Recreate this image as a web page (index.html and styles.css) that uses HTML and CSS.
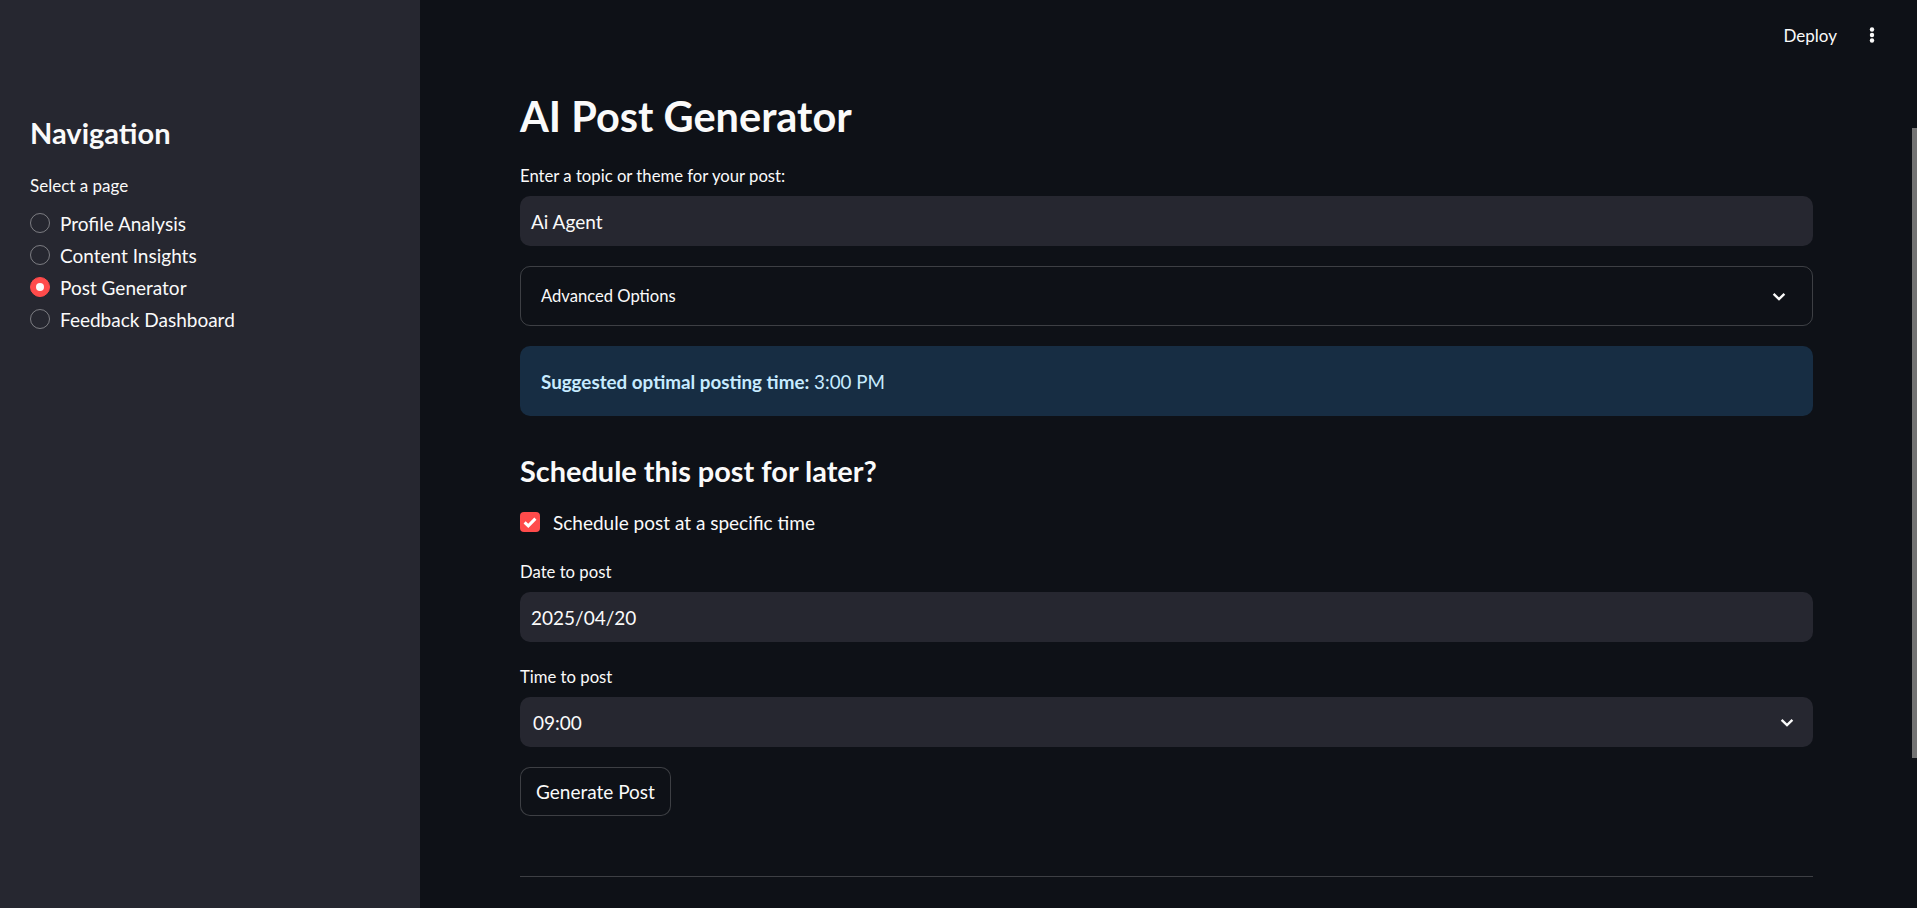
FILE: index.html
```html
<!DOCTYPE html>
<html lang="en">
<head>
<meta charset="utf-8">
<title>AI Post Generator</title>
<link rel="stylesheet" href="styles.css">
</head>
<body>
<div class="app">
  <aside class="sidebar">
    <h2 class="side-title">Navigation</h2>
    <div class="widget-label">Select a page</div>
    <div class="radio-list">
      <div class="radio"><span class="radio-dot"></span><span>Profile Analysis</span></div>
      <div class="radio"><span class="radio-dot"></span><span>Content Insights</span></div>
      <div class="radio selected"><span class="radio-dot"></span><span>Post Generator</span></div>
      <div class="radio"><span class="radio-dot"></span><span>Feedback Dashboard</span></div>
    </div>
  </aside>
  <main class="main">
    <header class="topbar">
      <span class="deploy">Deploy</span>
      <span class="kebab">
        <svg width="24" height="24" viewBox="0 0 24 24"><circle cx="12" cy="6.5" r="2.2" fill="#fafafa"/><circle cx="12" cy="12" r="2.2" fill="#fafafa"/><circle cx="12" cy="17.5" r="2.2" fill="#fafafa"/></svg>
      </span>
    </header>
    <div class="content">
      <h1 class="title">AI Post Generator</h1>
      <div class="field">
        <div class="widget-label">Enter a topic or theme for your post:</div>
        <div class="input">Ai Agent</div>
      </div>
      <div class="expander">
        <span>Advanced Options</span>
        <svg class="chev" width="14" height="9" viewBox="0 0 14 9"><path d="M1.6 1.8 L7 7 L12.4 1.8" fill="none" stroke="#fafafa" stroke-width="2.4"/></svg>
      </div>
      <div class="info"><strong>Suggested optimal posting time:</strong>&nbsp;3:00 PM</div>
      <h3 class="subtitle">Schedule this post for later?</h3>
      <div class="checkbox">
        <span class="check-box"><svg width="20" height="20" viewBox="0 0 20 20"><path d="M4.6 10.4 L8.3 13.9 L15.4 6.6" fill="none" stroke="#fff" stroke-width="3"/></svg></span>
        <span>Schedule post at a specific time</span>
      </div>
      <div class="field">
        <div class="widget-label">Date to post</div>
        <div class="input">2025/04/20</div>
      </div>
      <div class="field">
        <div class="widget-label">Time to post</div>
        <div class="input select">
          <span>09:00</span>
          <svg class="chev" width="14" height="9" viewBox="0 0 14 9"><path d="M1.6 1.8 L7 7 L12.4 1.8" fill="none" stroke="#fafafa" stroke-width="2.4"/></svg>
        </div>
      </div>
      <div class="btn-row"><button class="btn">Generate Post</button></div>
      <hr class="divider">
    </div>
  </main>
  <div class="scroll-thumb"></div>
</div>
</body>
</html>
```

FILE: styles.css
```css
* { box-sizing: border-box; }
html, body {
  margin: 0;
  padding: 0;
  height: 100%;
  background: #0e1117;
  color: #fafafa;
  font-family: Lato, "Noto Sans", sans-serif;
  overflow: hidden;
}
.app {
  display: flex;
  height: 908px;
  position: relative;
}
.sidebar {
  width: 420px;
  flex: 0 0 420px;
  background: #262730;
  padding: 113px 30px 0 30px;
}
.side-title {
  margin: 0 0 18px 0;
  font-size: 29px;
  line-height: 40px;
  font-weight: 700;
}
.widget-label {
  font-size: 16.7px;
  line-height: 30px;
  margin-bottom: 5px;
}
.sidebar .widget-label { margin-bottom: 6px; font-size: 17px; }
.radio-list { display: flex; flex-direction: column; }
.radio {
  display: flex;
  align-items: center;
  gap: 10px;
  height: 32px;
  font-size: 19px;
}
.radio-dot {
  width: 20px;
  height: 20px;
  border-radius: 50%;
  border: 1px solid rgba(250, 250, 250, 0.4);
  flex: 0 0 20px;
}
.radio.selected .radio-dot {
  background: #ff4b4b;
  border-color: #ff4b4b;
  display: flex;
  align-items: center;
  justify-content: center;
}
.radio.selected .radio-dot::after {
  content: "";
  width: 8px;
  height: 8px;
  border-radius: 50%;
  background: #fafafa;
}
.main {
  flex: 1;
  display: flex;
  flex-direction: column;
}
.topbar {
  height: 70px;
  display: flex;
  align-items: center;
  justify-content: flex-end;
  gap: 23px;
  padding-right: 33px;
}
.deploy { font-size: 17px; }
.kebab { display: flex; }
.content {
  padding: 21px 104px 0 100px;
  display: flex;
  flex-direction: column;
  gap: 20px;
}
.title {
  margin: 0;
  font-size: 41.5px;
  line-height: 50px;
  font-weight: 700;
}
.field { display: flex; flex-direction: column; }
.input {
  height: 50px;
  background: #262730;
  border-radius: 10px;
  display: flex;
  align-items: center;
  padding: 0 11px;
  font-size: 19px;
}
.select {
  justify-content: space-between;
  padding: 0 19px 0 13px;
}
.expander {
  height: 60px;
  border: 1px solid rgba(250, 250, 250, 0.2);
  border-radius: 10px;
  display: flex;
  align-items: center;
  justify-content: space-between;
  padding: 0 26px 0 20px;
  font-size: 16.6px;
}
.chev { display: block; }
.info {
  height: 70px;
  background: #172d43;
  border-radius: 10px;
  color: #c7ebff;
  display: flex;
  align-items: center;
  padding: 0 21px;
  font-size: 18.8px;
}
.info strong { font-weight: 700; }
.subtitle {
  margin: 0;
  padding-top: 18px;
  font-size: 28.9px;
  line-height: 33px;
  font-weight: 700;
}
.checkbox {
  height: 30px;
  display: flex;
  align-items: center;
  gap: 13px;
  font-size: 19px;
}
.check-box {
  width: 20px;
  height: 20px;
  border-radius: 4px;
  background: #ff4b4b;
  display: flex;
}
.btn-row { display: flex; }
.btn {
  height: 49px;
  padding: 0 15px;
  background: #0e1117;
  color: #fafafa;
  border: 1px solid rgba(250, 250, 250, 0.2);
  border-radius: 10px;
  font-family: inherit;
  font-size: 19px;
}
.divider {
  margin: 40px 0 0 0;
  border: none;
  border-top: 1px solid rgba(250, 250, 250, 0.2);
}
.scroll-thumb {
  position: absolute;
  right: 0;
  top: 128px;
  width: 5px;
  height: 630px;
  background: #737373;
}
```
